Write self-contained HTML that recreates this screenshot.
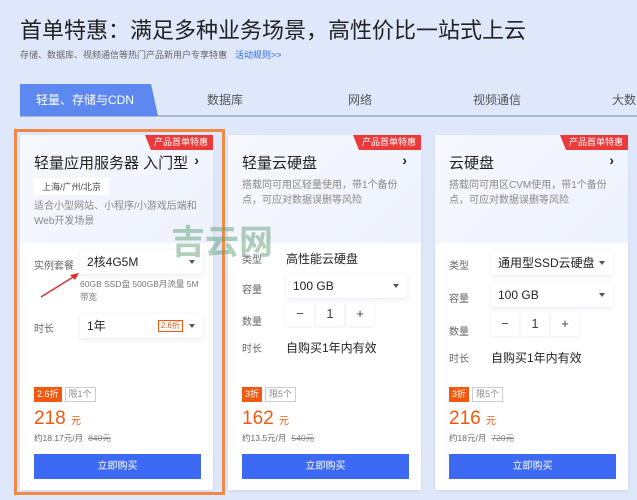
<!DOCTYPE html>
<html><head><meta charset="utf-8"><style>
*{margin:0;padding:0;box-sizing:border-box}
body{width:637px;height:500px;overflow:hidden;background:#dfe7fb;font-family:"Liberation Sans","Noto Sans CJK SC",sans-serif;position:relative;color:#333}
.a{position:absolute}
.h1{left:20px;top:13px;font-size:22px;color:#222}
.sub{left:20px;top:48px;font-size:9px;color:#666}
.sub span{color:#2c6be6;margin-left:8px}
.tabline{left:20px;top:115px;width:617px;height:2px;background:#a9b8d6}
.tab{top:84px;height:32px;line-height:32px;font-size:12px;color:#555}
.act{left:20px;width:138px;background:#5c88f0;color:#fff;text-align:center;clip-path:polygon(0 0,131px 0,138px 100%,0 100%);padding-right:8px}
.card{top:135px;width:193px;height:355px;background:#fff;box-shadow:0 1px 3px rgba(100,120,180,.15)}
.top{position:absolute;left:0;top:0;width:100%;height:108px;background:linear-gradient(135deg,#f6f8fe,#eef2fc)}
.badge{position:absolute;right:0;top:0;height:15px;line-height:15px;padding:0 5px 0 9px;background:#ea3a3a;color:#fff;font-size:9px;clip-path:polygon(0 0,100% 0,100% 100%,6px 100%)}
.tt{position:absolute;left:14px;top:17px;font-size:15px;color:#222}
.arr{position:absolute;right:14px;top:17px;font-size:14px;color:#222;font-weight:bold}
.desc{position:absolute;left:14px;font-size:10px;color:#888;line-height:15px}
.lbl{position:absolute;left:14px;font-size:10px;color:#666}
.sel{position:absolute;height:24px;background:#fff;box-shadow:0 1px 4px rgba(120,140,190,.2);font-size:12px;line-height:24px;padding-left:7px;color:#222}
.sel i{position:absolute;right:8px;top:10px;border:3px solid transparent;border-top:4px solid #555}
.val{position:absolute;font-size:12px;color:#222}
.qty{position:absolute;display:flex;height:24px}
.qty div{width:28px;height:24px;background:#fff;margin-right:2px;box-shadow:0 1px 3px rgba(120,140,190,.15);text-align:center;line-height:24px;font-size:13px;color:#444}
.pz{position:absolute;top:252px;left:14px;font-size:9px;display:flex}
.pz b{font-weight:normal;background:#f0590f;color:#fff;padding:0 3px;height:15px;line-height:15px}
.pz span{border:1px solid #ccc;color:#888;padding:0 3px;height:15px;line-height:13px;margin-left:3px}
.pr{position:absolute;top:273px;left:14px;font-size:19px;color:#f0590f}
.pr small{font-size:10px}
.mo{position:absolute;top:297px;left:14px;font-size:8.5px;color:#666}
.mo s{margin-left:5px;color:#888}
.btn{position:absolute;left:14px;top:319px;width:167px;height:25px;background:#3d6af2;color:#fff;font-size:10px;text-align:center;line-height:25px}
</style></head><body>
<div class="a h1">首单特惠：满足多种业务场景，高性价比一站式上云</div>
<div class="a sub">存储、数据库、视频通信等热门产品新用户专享特惠<span>活动规则&gt;&gt;</span></div>
<div class="a tabline"></div>
<div class="a tab act">轻量、存储与CDN</div>
<div class="a tab" style="left:207px">数据库</div>
<div class="a tab" style="left:348px">网络</div>
<div class="a tab" style="left:473px">视频通信</div>
<div class="a tab" style="left:612px">大数</div>

<div class="a card" style="left:20px">
<div class="top"></div><div class="badge">产品首单特惠</div>
<div class="tt">轻量应用服务器 入门型</div><div class="arr">›</div>
<div style="position:absolute;left:14px;top:43px;background:#fff;padding:2px 8px;font-size:9px;color:#444">上海/广州/北京</div>
<div class="desc" style="top:64px">适合小型网站、小程序/小游戏后端和<br>Web开发场景</div>
<div class="lbl" style="top:122px">实例套餐</div>
<div class="sel" style="left:60px;top:115px;width:123px">2核4G5M<i></i></div>
<div class="desc" style="left:60px;top:143px;font-size:8.5px;line-height:13px;color:#777">60GB SSD盘 500GB月流量 5M<br>带宽</div>
<div class="lbl" style="top:185px">时长</div>
<div class="sel" style="left:60px;top:179px;width:123px">1年<span style="position:absolute;right:20px;top:6px;border:1px solid #f0590f;color:#f0590f;font-size:8px;line-height:10px;padding:0 2px">2.6折</span><i></i></div>
<div class="pz"><b>2.6折</b><span>限1个</span></div>
<div class="pr">218 <small>元</small></div>
<div class="mo">约18.17元/月<s>840元</s></div>
<div class="btn">立即购买</div>
</div>

<div class="a card" style="left:228px">
<div class="top"></div><div class="badge">产品首单特惠</div>
<div class="tt">轻量云硬盘</div><div class="arr">›</div>
<div class="desc" style="top:43px">搭载同可用区轻量使用，带1个备份<br>点，可应对数据误删等风险</div>
<div class="lbl" style="top:116px">类型</div><div class="val" style="left:58px;top:115px">高性能云硬盘</div>
<div class="lbl" style="top:146px">容量</div>
<div class="sel" style="left:58px;top:139px;width:121px">100 GB<i></i></div>
<div class="lbl" style="top:178px">数量</div>
<div class="qty" style="left:58px;top:167px"><div>−</div><div>1</div><div>+</div></div>
<div class="lbl" style="top:205px">时长</div><div class="val" style="left:58px;top:204px">自购买1年内有效</div>
<div class="pz"><b>3折</b><span>限5个</span></div>
<div class="pr">162 <small>元</small></div>
<div class="mo">约13.5元/月<s>540元</s></div>
<div class="btn">立即购买</div>
</div>

<div class="a card" style="left:435px">
<div class="top"></div><div class="badge">产品首单特惠</div>
<div class="tt">云硬盘</div><div class="arr">›</div>
<div class="desc" style="top:43px">搭载同可用区CVM使用，带1个备份<br>点，可应对数据误删等风险</div>
<div class="lbl" style="top:122px">类型</div>
<div class="sel" style="left:56px;top:116px;width:122px">通用型SSD云硬盘<i></i></div>
<div class="lbl" style="top:155px">容量</div>
<div class="sel" style="left:56px;top:148px;width:122px">100 GB<i></i></div>
<div class="lbl" style="top:188px">数量</div>
<div class="qty" style="left:56px;top:177px"><div>−</div><div>1</div><div>+</div></div>
<div class="lbl" style="top:215px">时长</div><div class="val" style="left:56px;top:214px">自购买1年内有效</div>
<div class="pz"><b>3折</b><span>限5个</span></div>
<div class="pr">216 <small>元</small></div>
<div class="mo">约18元/月<s>720元</s></div>
<div class="btn">立即购买</div>
</div>

<div class="a" style="left:14px;top:129px;width:211px;height:366px;border:3px solid #ef8a44"></div>
<div class="a" style="left:171px;top:224px;font-size:34px;line-height:38px;font-weight:bold;color:rgba(100,160,120,.5)">吉云网</div>
<svg class="a" style="left:38px;top:270px" width="45" height="30"><line x1="3" y1="27" x2="40" y2="4" stroke="#d83030" stroke-width="1.5"/><path d="M41 3 L32 5 L37 10 Z" fill="#d83030"/></svg>
</body></html>
